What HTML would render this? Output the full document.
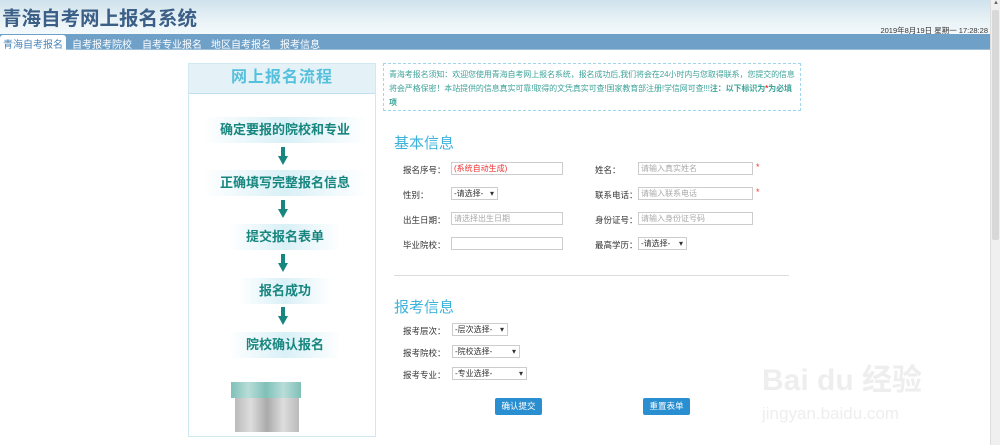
<!DOCTYPE html>
<html><head><meta charset="utf-8"><style>
*{margin:0;padding:0;box-sizing:border-box}
body{width:1000px;height:445px;overflow:hidden;background:#fff;font-family:"Liberation Sans","Noto Sans CJK SC",sans-serif;position:relative}
.a{position:absolute}
.hdr{left:0;top:0;width:990px;height:34px;background:linear-gradient(180deg,#cfe2ec 0%,#e8f2f6 60%,#f4f9fb 100%)}
.title{left:2px;top:2px;font-size:19.5px;font-weight:bold;color:#3b5f86;white-space:nowrap}
.date{right:12px;top:25px;font-size:7.5px;color:#333;white-space:nowrap}
.nav{left:0;top:34px;width:990px;height:16px;background:#6fa0c8;border-bottom:1px solid #9cc0da}
.nav span{position:absolute;top:2px;font-size:10px;color:#fff;white-space:nowrap}
.nav span.on{background:#fff;color:#4a86b8;left:0;top:1px;height:15px;padding:1px 3px;border-radius:3px 3px 0 0}
.sb{left:990px;top:0;width:10px;height:445px;background:#f0f0f0;border-left:1px solid #ddd}
.lp{left:188px;top:63px;width:188px;height:374px;border:1px solid #cfe8f2}
.lph{left:0;top:0;width:186px;height:30px;background:#e4f2f8;border-bottom:1px solid #bfe0ee;text-align:center;font-size:16px;font-weight:bold;color:#55c0dc;line-height:28px;letter-spacing:1px}
.step{position:absolute;font-size:13px;font-weight:bold;color:#17867e;text-align:center;background:linear-gradient(90deg,rgba(200,235,245,0),#d9f0f7 50%,rgba(200,235,245,0));height:26px;line-height:26px}
.arr{position:absolute;left:89px;width:10px;height:18px}
.notice{left:383px;top:63px;width:418px;height:48px;border:1px dashed #9fd6ee;padding:4px 5px;font-size:8px;line-height:14px;color:#3ea39a;letter-spacing:-0.1px}
.h{font-size:15px;color:#3db3dc}
.lbl{font-size:8.5px;color:#333}
.in{border:1px solid #ccc;height:13px;font-size:8px;color:#aaa;padding-left:2px;line-height:11px}
.sel{border:1px solid #ccc;height:13px;font-size:8px;color:#333;padding-left:2px;line-height:11px;background:#fff}
.sel:after{content:"▾";position:absolute;right:3px;top:0;font-size:8px}
.star{color:#e33;font-size:9px}
.btn{background:#2a8fd0;color:#fff;font-size:8.5px;text-align:center;line-height:17px;height:17px;border-radius:2px}
</style></head><body>
<div class="a hdr"></div>
<div class="a title">青海自考网上报名系统</div>
<div class="a date">2019年8月19日 星期一 17:28:28</div>
<div class="a nav"><span class="on">青海自考报名</span><span style="left:72px">自考报考院校</span><span style="left:142px">自考专业报名</span><span style="left:211px">地区自考报名</span><span style="left:280px">报考信息</span></div>
<div class="a sb"><div style="position:absolute;top:0;left:2px;font-size:6px;color:#666">▲</div><div style="position:absolute;top:10px;left:1px;width:7px;height:230px;background:#d8d8d8;border-radius:2px"></div></div>

<div class="a lp">
<div class="a lph">网上报名流程</div>
<div class="step" style="left:14px;top:53px;width:164px">确定要报的院校和专业</div>
<svg class="arr" style="top:83px" viewBox="0 0 10 18"><rect x="3" y="0" width="4" height="10" fill="#17867e"/><polygon points="0,9 10,9 5,18" fill="#17867e"/></svg>
<div class="step" style="left:14px;top:106px;width:164px">正确填写完整报名信息</div>
<svg class="arr" style="top:136px" viewBox="0 0 10 18"><rect x="3" y="0" width="4" height="10" fill="#17867e"/><polygon points="0,9 10,9 5,18" fill="#17867e"/></svg>
<div class="step" style="left:40px;top:160px;width:112px">提交报名表单</div>
<svg class="arr" style="top:190px" viewBox="0 0 10 18"><rect x="3" y="0" width="4" height="10" fill="#17867e"/><polygon points="0,9 10,9 5,18" fill="#17867e"/></svg>
<div class="step" style="left:50px;top:214px;width:92px">报名成功</div>
<svg class="arr" style="top:243px" viewBox="0 0 10 18"><rect x="3" y="0" width="4" height="10" fill="#17867e"/><polygon points="0,9 10,9 5,18" fill="#17867e"/></svg>
<div class="step" style="left:40px;top:268px;width:112px">院校确认报名</div>
<div class="a" style="left:42px;top:318px;width:70px;height:16px;background:linear-gradient(90deg,#7fc0b8,#b9ddd8,#7fc0b8,#b9ddd8,#7fc0b8)"></div>
<div class="a" style="left:46px;top:334px;width:64px;height:34px;background:linear-gradient(90deg,#bbb,#ddd,#aaa,#ddd,#bbb)"></div>
</div>

<div class="a notice">青海考报名须知：欢迎您使用青海自考网上报名系统，报名成功后,我们将会在24小时内与您取得联系，您提交的信息将会严格保密！本站提供的信息真实可靠!取得的文凭真实可查!国家教育部注册!学信网可查!!!<b>注：以下标识为<span style="color:#e33">*</span>为必填项</b></div>

<div class="a h" style="left:394px;top:132px">基本信息</div>
<div class="a lbl" style="left:403px;top:164px">报名序号：</div><div class="a in" style="left:451px;top:162px;width:112px;color:#e33">(系统自动生成)</div>
<div class="a lbl" style="left:595px;top:164px">姓名：</div><div class="a in" style="left:638px;top:162px;width:115px">请输入真实姓名</div><div class="a star" style="left:756px;top:162px">*</div>
<div class="a lbl" style="left:403px;top:189px">性别：</div><div class="a sel" style="left:451px;top:187px;width:47px">-请选择-</div>
<div class="a lbl" style="left:595px;top:189px">联系电话：</div><div class="a in" style="left:638px;top:187px;width:115px">请输入联系电话</div><div class="a star" style="left:756px;top:187px">*</div>
<div class="a lbl" style="left:403px;top:214px">出生日期：</div><div class="a in" style="left:451px;top:212px;width:112px">请选择出生日期</div>
<div class="a lbl" style="left:595px;top:214px">身份证号：</div><div class="a in" style="left:638px;top:212px;width:115px">请输入身份证号码</div>
<div class="a lbl" style="left:403px;top:239px">毕业院校：</div><div class="a in" style="left:451px;top:237px;width:112px"></div>
<div class="a lbl" style="left:595px;top:239px">最高学历：</div><div class="a sel" style="left:638px;top:237px;width:49px">-请选择-</div>
<div class="a" style="left:394px;top:275px;width:395px;height:1px;background:#ddd"></div>
<div class="a h" style="left:394px;top:296px">报考信息</div>
<div class="a lbl" style="left:403px;top:325px">报考层次：</div><div class="a sel" style="left:452px;top:323px;width:56px">-层次选择-</div>
<div class="a lbl" style="left:403px;top:347px">报考院校：</div><div class="a sel" style="left:452px;top:345px;width:68px">-院校选择-</div>
<div class="a lbl" style="left:403px;top:369px">报考专业：</div><div class="a sel" style="left:452px;top:367px;width:75px">-专业选择-</div>
<div class="a btn" style="left:495px;top:398px;width:47px">确认提交</div>
<div class="a btn" style="left:643px;top:398px;width:47px">重置表单</div>
<div class="a" style="left:762px;top:355px;font-size:30px;color:#eeeeee;font-weight:bold;white-space:nowrap">Bai du 经验</div>
<div class="a" style="left:762px;top:404px;font-size:17px;color:#eeeeee;white-space:nowrap">jingyan.baidu.com</div>
</body></html>
